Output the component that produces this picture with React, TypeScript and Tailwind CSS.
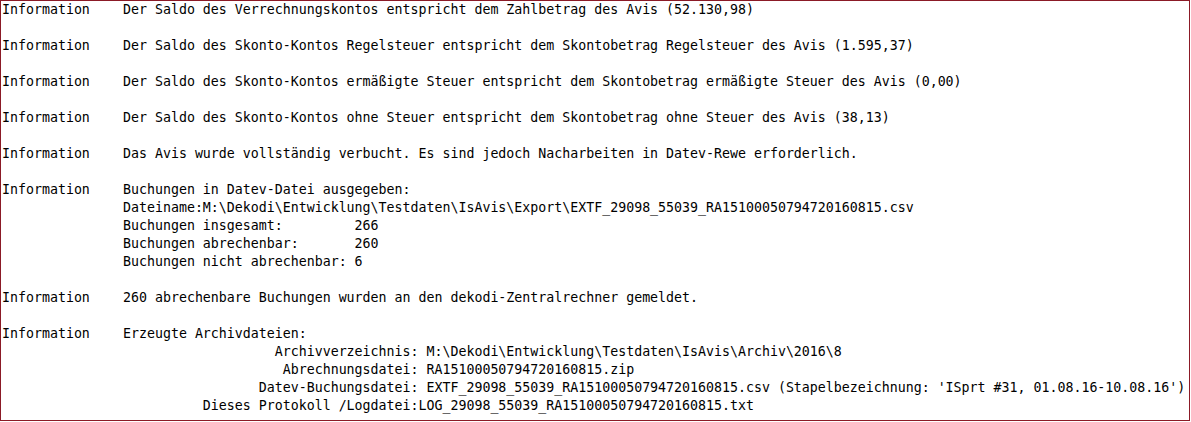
import React from "react";

type Entry = { label: string; lines: string[] };

const entries: Entry[] = [
  { label: "Information", lines: ["Der Saldo des Verrechnungskontos entspricht dem Zahlbetrag des Avis (52.130,98)"] },
  { label: "Information", lines: ["Der Saldo des Skonto-Kontos Regelsteuer entspricht dem Skontobetrag Regelsteuer des Avis (1.595,37)"] },
  { label: "Information", lines: ["Der Saldo des Skonto-Kontos ermäßigte Steuer entspricht dem Skontobetrag ermäßigte Steuer des Avis (0,00)"] },
  { label: "Information", lines: ["Der Saldo des Skonto-Kontos ohne Steuer entspricht dem Skontobetrag ohne Steuer des Avis (38,13)"] },
  { label: "Information", lines: ["Das Avis wurde vollständig verbucht. Es sind jedoch Nacharbeiten in Datev-Rewe erforderlich."] },
  {
    label: "Information",
    lines: [
      "Buchungen in Datev-Datei ausgegeben:",
      "Dateiname:M:\\Dekodi\\Entwicklung\\Testdaten\\IsAvis\\Export\\EXTF_29098_55039_RA15100050794720160815.csv",
      "Buchungen insgesamt:         266",
      "Buchungen abrechenbar:       260",
      "Buchungen nicht abrechenbar: 6",
    ],
  },
  { label: "Information", lines: ["260 abrechenbare Buchungen wurden an den dekodi-Zentralrechner gemeldet."] },
  {
    label: "Information",
    lines: [
      "Erzeugte Archivdateien:",
      "                   Archivverzeichnis: M:\\Dekodi\\Entwicklung\\Testdaten\\IsAvis\\Archiv\\2016\\8",
      "                    Abrechnungsdatei: RA15100050794720160815.zip",
      "                 Datev-Buchungsdatei: EXTF_29098_55039_RA15100050794720160815.csv (Stapelbezeichnung: 'ISprt #31, 01.08.16-10.08.16')",
      "          Dieses Protokoll /Logdatei:LOG_29098_55039_RA15100050794720160815.txt",
    ],
  },
];

export default function App() {
  return (
    <div className="bg-white w-[1191px] h-[422px]">
      <div
        className="w-[1190px] h-[421px] border border-[#8b1a26] bg-white text-black pl-px overflow-hidden text-[13.28px] leading-[18px]"
        style={{ fontFamily: '"DejaVu Sans Mono", "Liberation Mono", monospace' }}
      >
        {entries.map((e, i) => (
          <div key={i} className="flex flex-row pb-[18px]">
            <div className="w-[121px] shrink-0 whitespace-pre">{e.label}</div>
            <div className="flex flex-col">
              {e.lines.map((l, j) => (
                <div key={j} className="whitespace-pre h-[18px]">
                  {l}
                </div>
              ))}
            </div>
          </div>
        ))}
      </div>
    </div>
  );
}
